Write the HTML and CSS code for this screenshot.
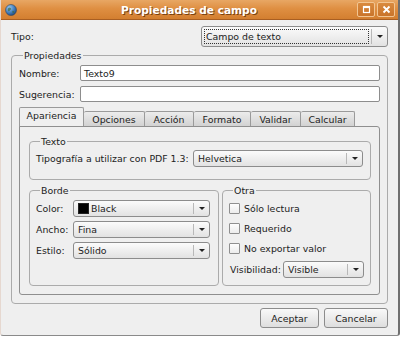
FILE: index.html
```html
<!DOCTYPE html>
<html>
<head>
<meta charset="utf-8">
<link rel="stylesheet" href="styles.css">
</head>
<body>
<div class="win">
  <div class="titlebar">
    <span class="ticon">
      <svg width="12" height="12" viewBox="0 0 12 12">
        <defs><radialGradient id="g" cx="0.35" cy="0.3" r="0.8"><stop offset="0" stop-color="#9cc8f0"/><stop offset="0.6" stop-color="#3c78b8"/><stop offset="1" stop-color="#1d3f6e"/></radialGradient></defs>
        <circle cx="6" cy="6" r="5.5" fill="url(#g)" stroke="#3a4a5a" stroke-width="0.6"/>
        <path d="M3 4.5 C4 3 5.5 3.5 6 4.5 C6.5 5.5 5 6 4.5 7 C4 8 3 7 2.8 6 Z" fill="#3c6a3c" opacity="0.7"/>
        <path d="M7.5 7 C8.5 6.5 9.5 7.5 9 8.5 C8.5 9.5 7.5 9 7.2 8 Z" fill="#3c6a3c" opacity="0.7"/>
      </svg>
    </span>
    <span class="ttitle">Propiedades de campo</span>
    <span class="tbtns">
      <span class="tbtn"><svg width="9" height="9" viewBox="0 0 9 9"><rect x="1.5" y="1.5" width="6" height="6" fill="none" stroke="#fff" stroke-width="1.2"/><rect x="1.5" y="1.5" width="6" height="1.6" fill="#fff"/></svg></span>
      <span class="tbtn"><svg width="9" height="9" viewBox="0 0 9 9"><path d="M1.5 1.5 L7.5 7.5 M7.5 1.5 L1.5 7.5" stroke="#fff" stroke-width="1.8"/></svg></span>
    </span>
  </div>
  <div class="content">
    <div class="tipo">
      <span class="lbl">Tipo:</span>
      <div class="combo big focus"><span class="cval"><span class="focusbox">Campo de texto</span></span><span class="carrow"><i></i></span></div>
    </div>
    <fieldset class="frame props">
      <legend>Propiedades</legend>
      <div class="field"><span class="flabel">Nombre:</span><div class="entry">Texto9</div></div>
      <div class="field"><span class="flabel">Sugerencia:</span><div class="entry"></div></div>
      <div class="notebook">
        <div class="tabs">
          <span class="tab active">Apariencia</span>
          <span class="tab">Opciones</span>
          <span class="tab">Acción</span>
          <span class="tab">Formato</span>
          <span class="tab">Validar</span>
          <span class="tab">Calcular</span>
        </div>
        <div class="panel">
          <fieldset class="frame texto">
            <legend>Texto</legend>
            <div class="trow">
              <span class="tlabel">Tipografía a utilizar con PDF 1.3:</span>
              <div class="combo helv"><span class="cval">Helvetica</span><span class="carrow"><i></i></span></div>
            </div>
          </fieldset>
          <div class="cols">
            <fieldset class="frame borde">
              <legend>Borde</legend>
              <div class="brow"><span class="blabel">Color:</span><div class="combo"><span class="cval"><span class="swatch"></span>Black</span><span class="carrow"><i></i></span></div></div>
              <div class="brow"><span class="blabel">Ancho:</span><div class="combo"><span class="cval">Fina</span><span class="carrow"><i></i></span></div></div>
              <div class="brow"><span class="blabel">Estilo:</span><div class="combo"><span class="cval">Sólido</span><span class="carrow"><i></i></span></div></div>
            </fieldset>
            <fieldset class="frame otra">
              <legend>Otra</legend>
              <div class="check"><span class="box"></span>Sólo lectura</div>
              <div class="check"><span class="box"></span>Requerido</div>
              <div class="check"><span class="box"></span>No exportar valor</div>
              <div class="vrow"><span class="vlabel">Visibilidad:</span><div class="combo vis"><span class="cval">Visible</span><span class="carrow"><i></i></span></div></div>
            </fieldset>
          </div>
        </div>
      </div>
    </fieldset>
    <div class="buttons">
      <span class="btn ok">Aceptar</span>
      <span class="btn cancel">Cancelar</span>
    </div>
  </div>
</div>
</body>
</html>
```

FILE: styles.css
```css
* { box-sizing: border-box; }
html, body { margin: 0; padding: 0; background: #ffffff; }
body { width: 400px; height: 338px; overflow: hidden; font-family: "DejaVu Sans", sans-serif; font-size: 9.4px; color: #222; }

.win {
  width: 400px;
  height: 336px;
  background: #efefef;
  border-left: 1px solid #e6d8d0;
  border-right: 2px solid #6f6f6f;
  border-bottom: 1px solid #8a8a8a;
  border-radius: 0 0 3px 3px;
  display: flex;
  flex-direction: column;
}

.titlebar {
  height: 20px;
  display: flex;
  align-items: center;
  background: linear-gradient(#e8a764 0%, #df8f42 45%, #d37f30 100%);
  border-bottom: 1px solid #a85e22;
  padding: 0 3px 0 4px;
}
.ticon { width: 12px; height: 12px; display: flex; }
.ttitle {
  flex: 1;
  text-align: center;
  color: #fff;
  font-weight: bold;
  font-size: 10.6px;
  text-shadow: 1px 1px 0 #7a4010;
  padding-left: 4px;
}
.tbtns { display: flex; gap: 2px; }
.tbtn {
  width: 18px; height: 15px;
  display: flex; align-items: center; justify-content: center;
  border: 1px solid #f2c592;
  border-radius: 2px;
  background: linear-gradient(#d98a3e, #c9742a);
}

.content {
  flex: 1;
  padding: 6px 10px 0 10px;
  display: flex;
  flex-direction: column;
}

.tipo {
  height: 21px;
  display: flex;
  align-items: center;
  justify-content: space-between;
  margin-bottom: 3px;
}

.combo {
  display: flex;
  height: 17px;
  border: 1px solid #8c8c8c;
  border-radius: 3px;
  background: linear-gradient(#fbfbfb, #e2e2e2);
  align-items: stretch;
}
.combo .cval { flex: 1; display: flex; align-items: center; padding-left: 4px; white-space: nowrap; overflow: hidden; }
.combo .carrow {
  width: 16px;
  display: flex; align-items: center; justify-content: center;
  border-left: 1px solid #b8b8b8;
  margin: 2px 0;
}
.combo .carrow i {
  width: 0; height: 0;
  border-left: 3px solid transparent;
  border-right: 3px solid transparent;
  border-top: 3px solid #222;
}
.combo.big { width: 187px; height: 21px; }
.combo.big .cval { padding: 2px 2px 2px 2px; }
.focusbox { flex: 1; height: 100%; display: flex; align-items: center; border: 1px dotted #333; padding-left: 1px; }

.frame {
  margin: 0;
  border: 1px solid #ababab;
  border-radius: 4px;
  min-width: 0;
}
.frame legend {
  padding: 0 1px;
  margin-left: 4px;
  line-height: 11px;
  font-size: 9.4px;
}

.props { padding: 4px 7px 8px 7px; }

.field { display: flex; align-items: center; height: 16px; margin-bottom: 5px; }
.flabel { width: 61px; }
.entry {
  flex: 1;
  height: 16px;
  border: 1px solid #8d8d8d;
  border-radius: 2px;
  background: #fff;
  padding-left: 3px;
  display: flex; align-items: center;
}
.field + .field { margin-bottom: 4px; }

.notebook { display: flex; flex-direction: column; }
.tabs { display: flex; align-items: flex-end; height: 20px; }
.tab {
  height: 15px;
  padding: 0;
  display: flex; align-items: center; justify-content: center;
  border: 1px solid #9a9a9a;
  border-bottom: none;
  border-left: none;
  border-radius: 2px 2px 0 0;
  background: linear-gradient(#ececec, #d2d2d2);
  white-space: nowrap;
}
.tab.active {
  height: 20px;
  border-left: 1px solid #9a9a9a;
  background: #efefef;
  margin-bottom: -1px;
  padding: 0 0 4px 0;
  width: 65px;
}
.tab:nth-child(2) { width: 61px; }
.tab:nth-child(3) { width: 49px; }
.tab:nth-child(4) { width: 57px; }
.tab:nth-child(5) { width: 50px; }
.tab:nth-child(6) { width: 54px; }

.panel {
  border: 1px solid #8f8f8f;
  border-radius: 0 3px 3px 3px;
  padding: 9px 8px 8px 9px;
  background: #efefef;
}

.texto { padding: 3px 7px 13px 6px; margin-bottom: 5px; }
.trow { display: flex; align-items: center; height: 16px; }
.tlabel { width: 157px; white-space: nowrap; }
.combo.helv { flex: 1; height: 17px; }

.cols { display: flex; gap: 3px; }
.borde { width: 190px; padding: 4px 8px 22px 6px; }
.brow { display: flex; align-items: center; height: 17px; margin-bottom: 4px; }
.blabel { width: 37px; }
.brow .combo { flex: 1; }
.swatch { width: 11px; height: 11px; background: #000; border: 1px solid #222; margin-right: 2px; }

.otra { flex: 1; padding: 2px 6px 6px 6px; }
.check { display: flex; align-items: center; height: 20px; }
.box {
  width: 11px; height: 11px;
  border: 1px solid #8f8f8f;
  border-radius: 1px;
  background: linear-gradient(#fdfdfd, #ececec);
  margin-right: 4px;
}
.vrow { display: flex; align-items: center; height: 17px; margin-top: 3px; padding-left: 1px; }
.vlabel { width: 53px; }
.combo.vis { flex: 1; }

.buttons {
  display: flex;
  justify-content: flex-end;
  gap: 5px;
  margin-top: 4px;
}
.btn {
  height: 20px;
  display: flex; align-items: center; justify-content: center;
  border: 1px solid #8c8c8c;
  border-radius: 3px;
  background: linear-gradient(#f9f9f9, #dedede);
}
.btn.ok { width: 59px; }
.btn.cancel { width: 64px; }
```
